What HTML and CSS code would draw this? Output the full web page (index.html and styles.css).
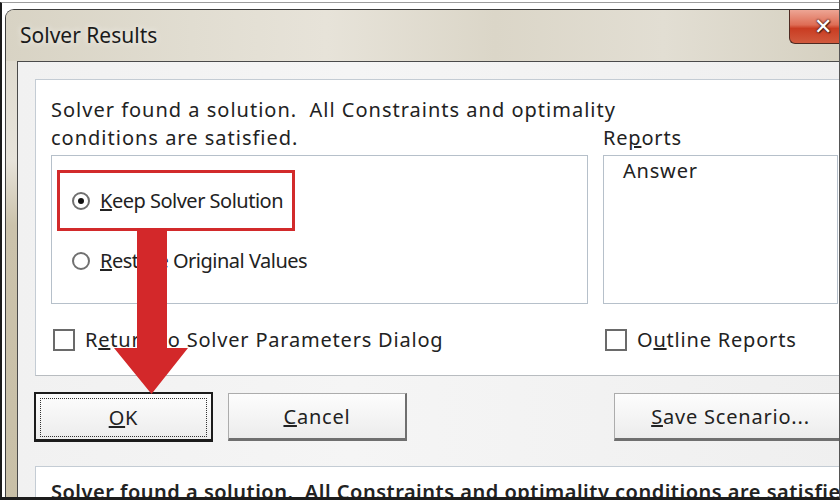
FILE: index.html
```html
<!DOCTYPE html>
<html lang="en">
<head>
  <meta charset="UTF-8" />
  <title>Solver Results</title>
  <link rel="stylesheet" href="styles.css">
</head>
<body>
  <div class="shot">
    <div class="outer">
      <div class="window">
        <div class="titlebar">
          <span class="title">Solver Results</span>
          <span class="close"><span class="close-x">✕</span></span>
        </div>
        <div class="client">
          <div class="panel">
            <div class="grid">
              <p class="message">Solver found a solution.&nbsp; All Constraints and optimality<br>conditions are satisfied.</p>
              <span class="reports-label">Re<u>p</u>orts</span>
              <div class="group">
                <div class="option highlight"><span class="radio checked"></span><span><u>K</u>eep Solver Solution</span></div>
                <div class="option"><span class="radio"></span><span><u>R</u>estore Original Values</span></div>
              </div>
              <div class="list">
                <div class="list-item">Answer</div>
              </div>
              <label class="check"><span class="box"></span><span>R<u>e</u>turn to Solver Parameters Dialog</span></label>
              <label class="check"><span class="box"></span><span>O<u>u</u>tline Reports</span></label>
            </div>
          </div>
          <div class="buttons">
            <button class="btn btn-default"><span class="focus"><u>O</u>K</span></button>
            <button class="btn"><u>C</u>ancel</button>
            <button class="btn btn-save"><u>S</u>ave Scenario...</button>
          </div>
          <div class="panel panel-bottom">
            <p class="summary">Solver found a solution.&nbsp; All Constraints and optimality conditions are satisfied.</p>
          </div>
        </div>
      </div>
    </div>
    <!-- annotation arrow over the dialog -->
    <svg class="arrow" viewBox="0 0 78 168">
      <polygon points="25,0 55,0 55,120 76,120 39.5,166 2,120 25,120" fill="#d3282a"/>
    </svg>
  </div>
</body>
</html>
```

FILE: styles.css
```css
body { margin: 0; font-family: "Noto Sans", "Open Sans", sans-serif; color: #222; }
.shot {
  position: relative;
  width: 840px;
  height: 500px;
  box-sizing: border-box;
  overflow: hidden;
  background: #fff;
  padding-top: 2px;
  border-bottom: 3px solid #1c1c1c;
  border-right: 1px solid #555;
}
.outer {
  height: 100%;
  border-top: 1px solid #9c9c9c;
  border-left: 2px solid #1a1a1a;
  padding: 6px 0 0 3px;
}
.window {
  width: 843px;
  height: 600px;
  border-top: 1px solid #3c3c3c;
  border-left: 1px solid #3c3c3c;
  border-top-left-radius: 9px;
  overflow: hidden;
  background: linear-gradient(#dcd7ca, #e7e3da 150px, #cbc2ab 215px, #c7bea5);
}
.titlebar {
  display: flex;
  align-items: flex-start;
  height: 51px;
  background: linear-gradient(90deg, #d8d3c4 0%, #e1ddd1 22%, #e7e3d9 38%, #dbd6c8 58%, #e2ded3 78%, #d5d0c0 100%);
}
.title {
  flex: 1;
  padding-left: 14px;
  font-size: 21px;
  line-height: 51px;
  color: #1b1b1b;
  text-shadow: 0 0 6px rgba(255,255,255,.9);
}
.close {
  flex: none;
  display: flex;
  align-items: center;
  width: 60px;
  height: 34px;
  box-sizing: border-box;
  padding-left: 24px;
  border: 1px solid #4e2a22;
  border-top: none;
  border-right: none;
  border-bottom-left-radius: 6px;
  background: linear-gradient(#eda594, #de6d55 45%, #c93c22 56%, #d15a3e);
}
.close-x {
  font-family: "DejaVu Sans", sans-serif;
  font-size: 22px;
  font-weight: bold;
  line-height: 1;
  color: #fff;
  text-shadow: 0 0 2px #4a2018, 0 0 2px #4a2018, 1px 1px 1px #4a2018;
}
.client {
  height: 600px;
  margin-left: 11px;
  padding: 17px 0 0 17px;
  border-top: 1px solid #4a4a4a;
  border-left: 1px solid #4a4a4a;
  background: linear-gradient(90deg, #f1f1f1, #f5f5f5 40%, #efefef);
}
.panel {
  background: #fff;
  border-top: 1px solid #c4ccd4;
  border-left: 1px solid #c4ccd4;
  border-bottom: 1px solid #b8bcc0;
  padding: 16px 0 21px 15px;
}
.grid {
  display: grid;
  grid-template-columns: 537px 235px;
  column-gap: 15px;
  row-gap: 3px;
  font-size: 20px;
  line-height: 28px;
  letter-spacing: 0.8px;
}
.message { grid-column: 1 / 3; grid-row: 1; margin: 0; letter-spacing: 1px; }
.reports-label { grid-column: 2; grid-row: 1; align-self: end; }
.group, .list {
  height: 149px;
  box-sizing: border-box;
  border: 1px solid #b6c0ca;
}
.option {
  display: flex;
  align-items: center;
  gap: 10px;
  margin-top: 16px;
  padding-left: 20px;
  letter-spacing: -0.5px;
  white-space: nowrap;
}
.option.highlight {
  width: 238px;
  height: 61px;
  box-sizing: border-box;
  margin: 14px 0 0 5px;
  padding-left: 12px;
  border: 3px solid #d22a2b;
}
.radio {
  flex: none;
  display: flex;
  align-items: center;
  justify-content: center;
  width: 18px;
  height: 18px;
  box-sizing: border-box;
  border: 2.5px solid #707070;
  border-radius: 50%;
  background: #fff;
}
.radio.checked::after {
  content: "";
  width: 6px;
  height: 6px;
  border-radius: 50%;
  background: #111;
}
.list-item { padding: 1px 0 0 19px; }
.check {
  display: flex;
  align-items: center;
  gap: 10px;
  margin: 19px 0 0 2px;
  white-space: nowrap;
}
.box {
  flex: none;
  width: 22px;
  height: 22px;
  box-sizing: border-box;
  border: 2.5px solid #6a6a6a;
  background: #fff;
}
.buttons {
  display: flex;
  align-items: center;
  height: 50px;
  margin: 16px 0 0 -1px;
}
.btn {
  flex: none;
  width: 179px;
  height: 48px;
  box-sizing: border-box;
  margin-right: 15px;
  padding: 0;
  font: inherit;
  font-size: 20px;
  letter-spacing: 0.8px;
  color: #222;
  border: 1px solid #acacac;
  border-right: 2px solid #6f6f6f;
  border-bottom: 3px solid #6f6f6f;
  background: linear-gradient(#fdfdfd, #ececec);
}
.btn-default {
  height: 50px;
  padding: 4px;
  border: 2px solid #1b1b1b;
  border-bottom-width: 3px;
}
.focus {
  display: flex;
  align-items: center;
  justify-content: center;
  height: 100%;
  border: 1.5px dotted #333;
}
.btn-save { width: 234px; margin-left: 192px; }
.panel-bottom {
  margin-top: 24px;
  border-bottom: none;
  padding: 11px 0 0 15px;
}
.summary {
  margin: 0;
  font-size: 20px;
  font-weight: 600;
  line-height: 28px;
  letter-spacing: 0.5px;
  white-space: nowrap;
}
.arrow {
  position: absolute;
  left: 112px;
  top: 228px;
  width: 78px;
  height: 168px;
}
```
